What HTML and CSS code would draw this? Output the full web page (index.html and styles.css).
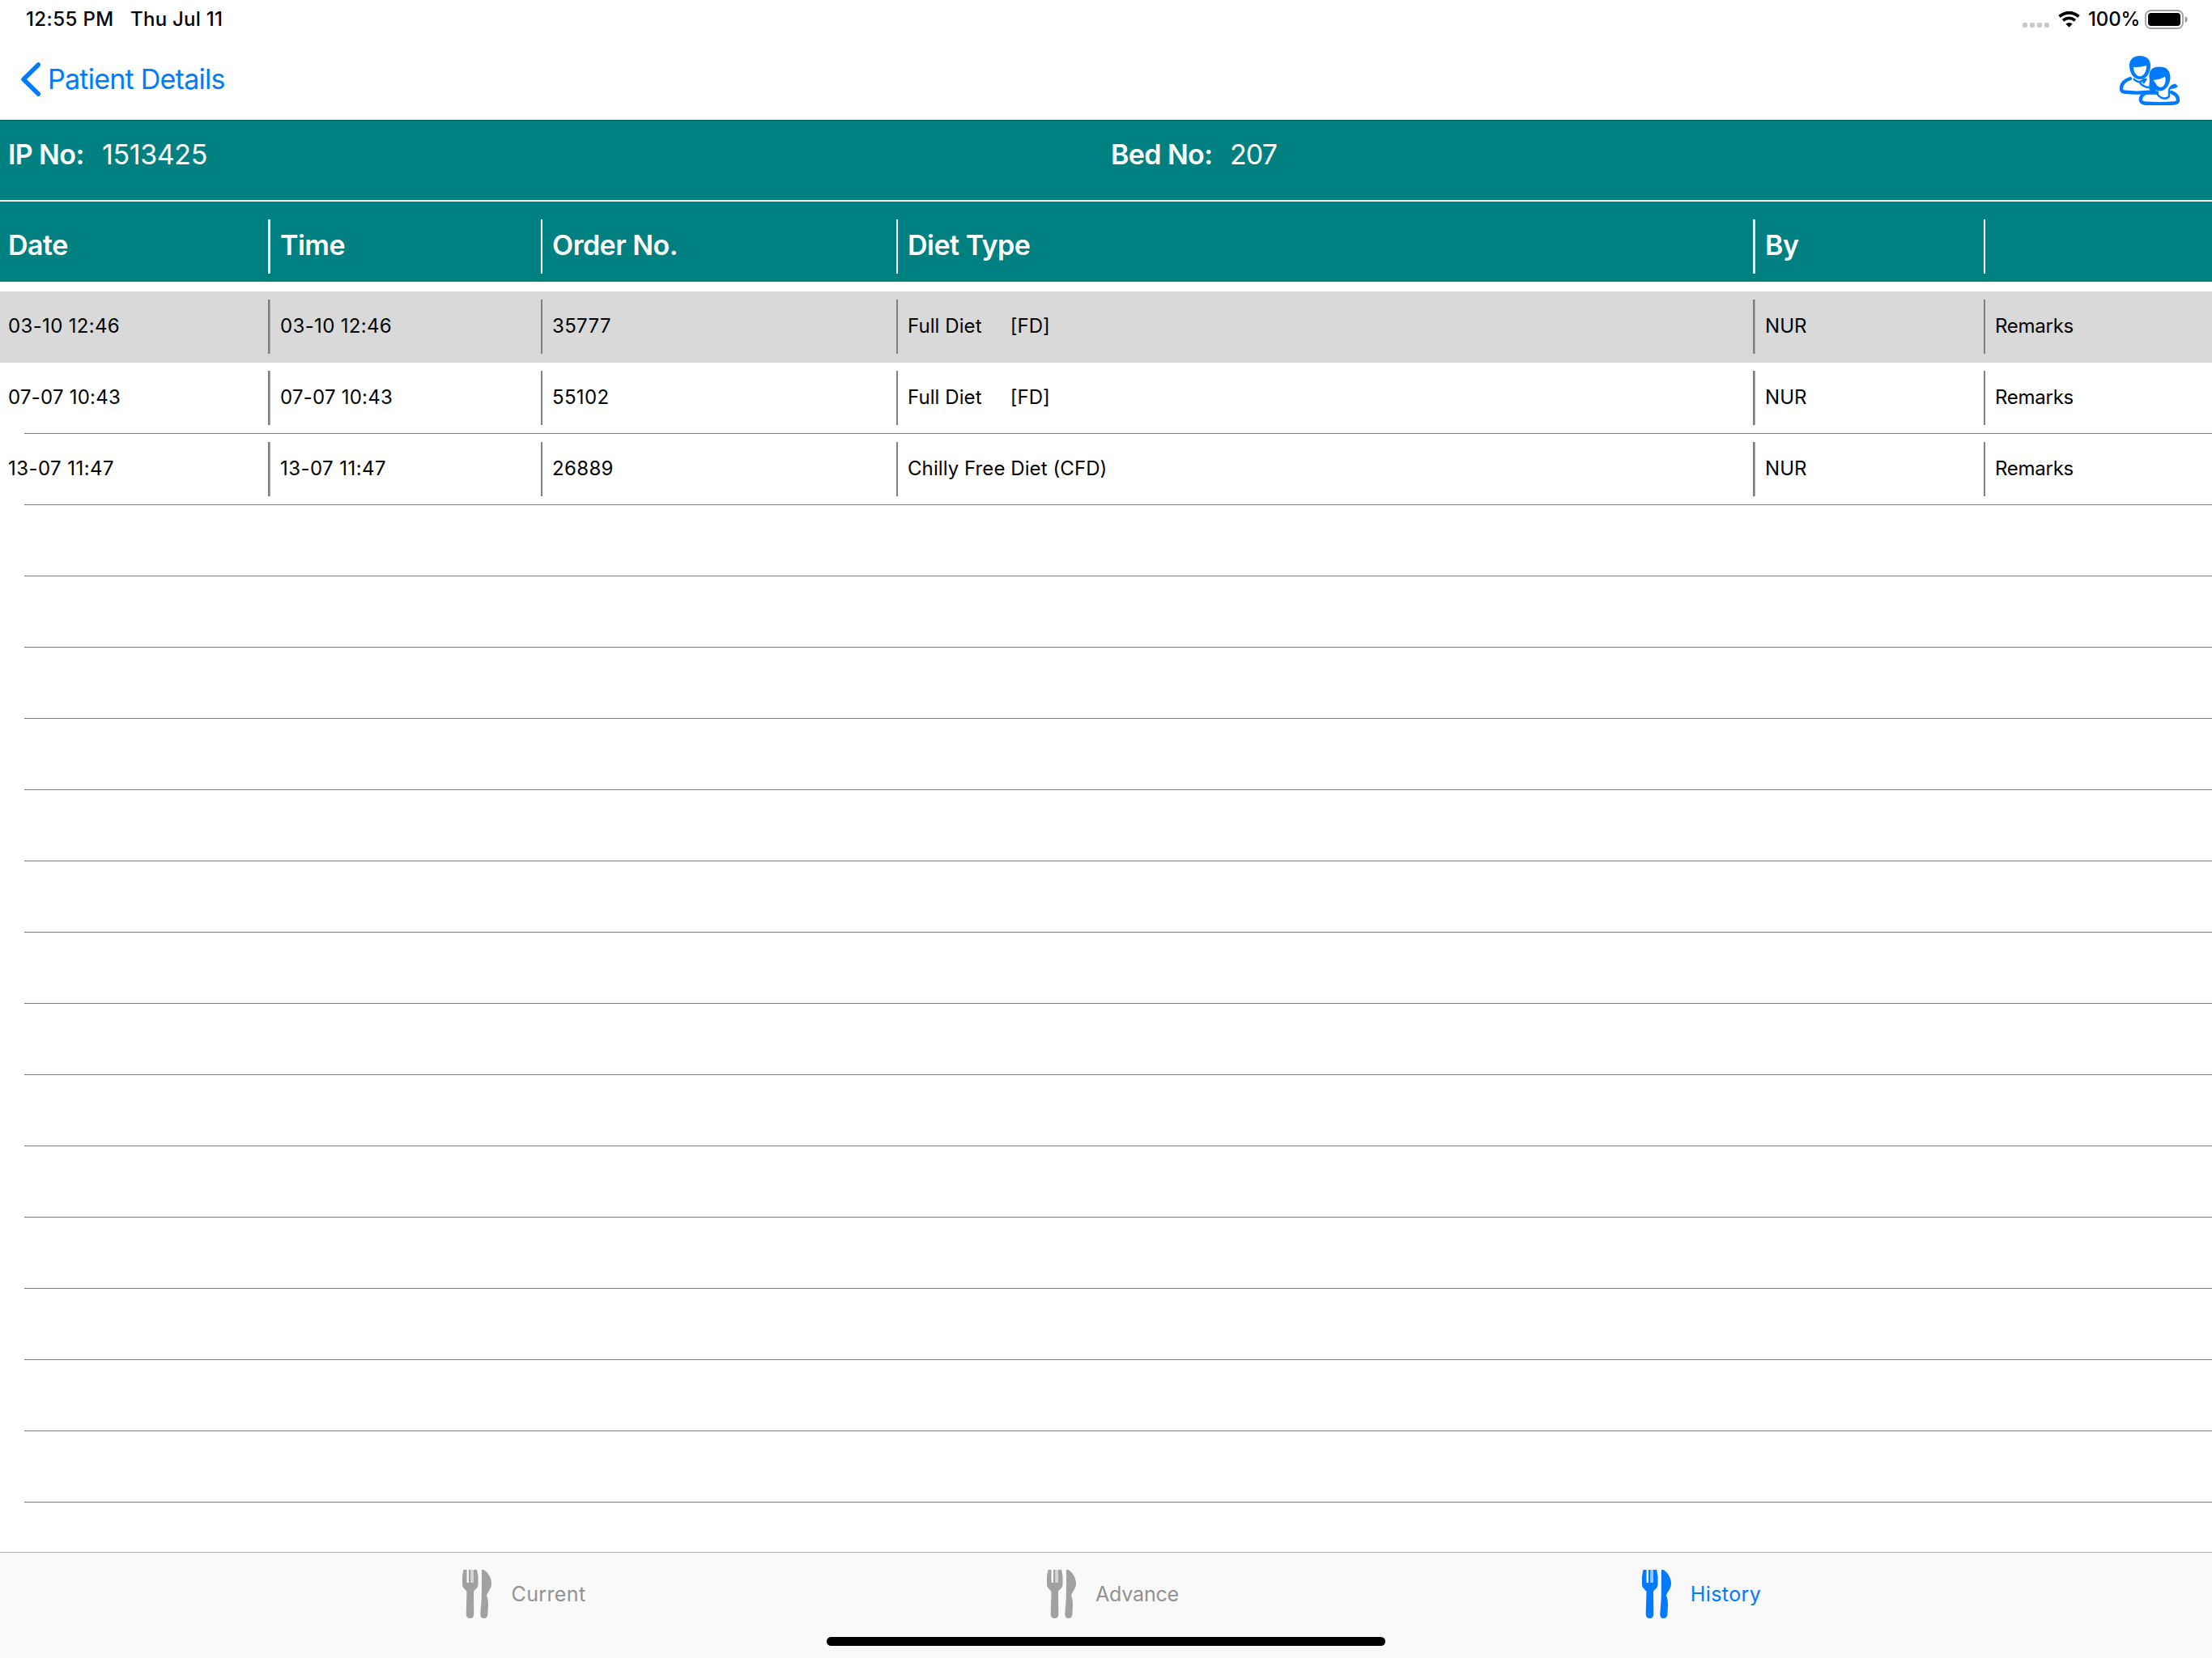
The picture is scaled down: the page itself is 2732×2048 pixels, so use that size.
FILE: index.html
```html
<!DOCTYPE html>
<html lang="en">
<head>
<meta charset="utf-8">
<title>Patient Diet History</title>
<link rel="stylesheet" href="styles.css">
</head>
<body>
<svg class="sprite" aria-hidden="true">
  <symbol id="cutlery" viewBox="0 0 36 60">
    <path d="M1.5 0H5.5V16H8V0H10.3V16H14V0H18L19.5 8V18C19.5 23 15.5 24 14 27L14.3 55Q14 60 9.5 60Q5 60 4.7 55L5.500 27C4 24 0 23 0 18V8Z"/>
    <path d="M10.300 0H14V16H10.300Z" opacity=".4"/>
    <path d="M24 0H26.5C31 3 36 9 36 17C36 24 31 27 30 32Q32 36 32 44L31.4 55Q31 60 26.500 60Q22.300 60 22.300 55L23.800 34Z"/>
  </symbol>
</svg>
<div class="screen">
  <header class="status">
    <span class="clock">12:55 PM</span>
    <span class="day">Thu Jul 11</span>
    <div class="indicators">
      <div class="dots"><i></i><i></i><i></i><i></i></div>
      <svg class="wifi" viewBox="0 0 27 20">
        <path d="M1.500 6.300Q13.500 -2.800 25.500 6.300" stroke-width="4"/>
        <path d="M6 11.300Q13.500 5.600 21 11.300" stroke-width="3.600"/>
        <path class="solid" d="M13.500 19.800L9.300 15.600Q13.500 12.300 17.700 15.600Z"/>
      </svg>
      <span class="percent">100%</span>
      <svg class="battery" viewBox="0 0 53 24">
        <rect class="shell" x="1" y="1" width="46" height="22" rx="6.500"/>
        <rect x="4" y="4" width="40" height="16" rx="3.800"/>
        <path class="cap" d="M49.700 8Q52.700 9 52.700 12Q52.700 15 49.700 16Z"/>
      </svg>
    </div>
  </header>
  <nav class="navbar">
    <a class="back">
      <svg viewBox="0 0 26 42"><path d="M22.300 3L4 21L22.300 39"/></svg>
      <span>Patient Details</span>
    </a>
    <svg class="people" viewBox="0 0 74 61">
      <path d="M13 28C4 31 1.800 36 2 41Q2.200 44.500 7 44.800Q22 46.500 38 44.500" class="outline"/>
      <path class="hair" fill-rule="evenodd" d="M25 0C16 0 12 5 12 12C12 21 17 29 25 29C33 29 38 21 38 12C38 5 34 0 25 0ZM17 14Q26 14.500 33 12C33.500 18 30 25.300 25 25.300C20 25.300 17 19 17 14Z"/>
      <path class="thin" d="M17 28Q20 32 25 32Q29 31 31 28M24 32Q29 39 36 39M29 34L33 28"/>
      <path d="M32 46C27 48 25.800 52 26 55Q26.500 58 31 58.500Q49 60 67 58.500Q72.500 58 72 54Q71.500 48 64 45" class="outline"/>
      <path class="hair" fill-rule="evenodd" d="M49 13.500C40 13.500 36 18 36.500 26C36.500 36 43 43.500 49.500 43.500C58 43 62.500 34 62.500 26C62 18 58 13.500 49 13.500ZM41.500 30Q51 29 56 25.500C58 32 55 38.800 50.500 38.800C46 38.800 45 34 41.500 30Z"/>
      <path class="hair" d="M37 30L45 43L40 46L36 40Z"/>
      <path class="thin" d="M45 45Q49 52 54 52.500Q59 53 61 50V42Q63 37 67 36.500"/>
      <path class="hair" d="M62 41Q64 34 69 34.500L72 38Q68 41 62 41Z"/>
      <path class="outline" d="M30 45.500H46"/>
    </svg>
  </nav>
  <section class="patient">
    <p class="ip"><b>IP No:</b><span>1513425</span></p>
    <p class="bed"><b>Bed No:</b><span>207</span></p>
  </section>
  <section class="columns grid">
    <span>Date</span><span>Time</span><span>Order No.</span><span>Diet Type</span><span>By</span><span></span>
  </section>
  <main class="orders">
    <div class="row grid selected"><span class="num">03-10 12:46</span><span class="num">03-10 12:46</span><span class="num">35777</span><span>Full Diet<em>[FD]</em></span><span>NUR</span><span class="remarks">Remarks</span></div>
    <div class="row grid"><span class="num snug">07-07 10:43</span><span class="num snug">07-07 10:43</span><span class="num">55102</span><span>Full Diet<em>[FD]</em></span><span>NUR</span><span class="remarks">Remarks</span></div>
    <div class="row grid"><span class="num loose">13-07 11:47</span><span class="num loose">13-07 11:47</span><span class="num">26889</span><span>Chilly Free Diet (CFD)</span><span>NUR</span><span class="remarks">Remarks</span></div>
    <div class="row"></div><div class="row"></div><div class="row"></div><div class="row"></div><div class="row"></div><div class="row"></div><div class="row"></div>
    <div class="row"></div><div class="row"></div><div class="row"></div><div class="row"></div><div class="row"></div><div class="row"></div><div class="row"></div>
  </main>
  <footer class="tabbar">
    <div class="tabs">
      <a class="tab"><svg><use href="#cutlery"/></svg><span>Current</span></a>
      <a class="tab advance"><svg><use href="#cutlery"/></svg><span>Advance</span></a>
      <a class="tab active"><svg><use href="#cutlery"/></svg><span>History</span></a>
    </div>
    <div class="home"></div>
  </footer>
</div>
</body>
</html>
```
FILE: styles.css
```css
* { box-sizing: border-box; }
body {
  margin: 0;
  background: #fff;
  color: #000;
  font-family: Inter, "Noto Sans", sans-serif;
}
p { margin: 0; }
.sprite { display: none; }
.screen {
  display: flex;
  flex-direction: column;
  width: 2732px;
  height: 2048px;
  overflow: hidden;
}

/* Status bar */
.status {
  display: flex;
  height: 47px;
  padding: 0 30px 0 32px;
  font-size: 24px;
  font-weight: 500;
  line-height: 48px;
  white-space: nowrap;
}
.clock { width: 129px; letter-spacing: .4px; }
.day { letter-spacing: .27px; }
.indicators { display: flex; margin-left: auto; }
.dots { display: flex; gap: 3px; margin: 28px 11px 0 0; }
.dots i { width: 6px; height: 6px; border-radius: 2px; background: #c8c8c8; }
.wifi { width: 27px; height: 20px; margin: 14px 10px 0 0; fill: none; stroke: #000; }
.wifi .solid { fill: #000; stroke: none; }
.percent { width: 70px; letter-spacing: -.15px; }
.battery { width: 53px; height: 24px; margin-top: 12px; }
.shell { fill: none; stroke: #a0a0a0; stroke-width: 1.8; }
.cap { fill: #999; }

/* Navigation bar */
.navbar {
  display: flex;
  justify-content: space-between;
  height: 101px;
  padding: 0 40px 0 25px;
  color: #007aff;
}
.back {
  display: flex;
  align-items: center;
  gap: 8px;
  font-size: 34px;
  line-height: 101px;
  letter-spacing: -.75px;
}
.back svg {
  width: 26px;
  height: 42px;
  fill: none;
  stroke: #007aff;
  stroke-width: 5.5;
  stroke-linecap: round;
  stroke-linejoin: round;
}
.people { width: 74px; height: 61px; margin-top: 22px; }
.outline { fill: none; stroke: #007aff; stroke-width: 4.4; stroke-linecap: round; }
.thin { fill: none; stroke: #007aff; stroke-width: 2.4; }
.hair { fill: #007aff; }

/* Patient strip */
.patient {
  display: grid;
  grid-template-columns: 1362px 1fr;
  height: 101px;
  padding-left: 10px;
  border-top: 1px solid #005c5c;
  border-bottom: 2px solid #fff;
  background: #008080;
  color: #fff;
  font-size: 34px;
  line-height: 83px;
}
.patient p { display: flex; }
.patient b { font-weight: 600; letter-spacing: -.6px; }
.ip b { width: 116px; }
.bed b { width: 147px; }
.patient span { letter-spacing: -.4px; }
.patient .bed span { letter-spacing: -.9px; }

/* Order table */
.grid {
  display: grid;
  grid-template-columns: 331px 337px 439px 1058px 285px 1fr;
  --edge: #808080;
  --edge-soft: #a8a8a8;
}
.grid > span {
  height: 67px;
  padding-left: 14px;
  white-space: pre;
  background: linear-gradient(var(--edge), var(--edge)) left / 2px 100% no-repeat;
}
.grid > span:first-child { padding-left: 10px; background: none; }
.grid > span:nth-child(2), .grid > span:nth-child(5) {
  padding-left: 15px;
  background: linear-gradient(90deg, var(--edge) 2px, var(--edge-soft) 2px, var(--edge-soft) 3px, transparent 3px);
}
.columns {
  --edge: #fff;
  --edge-soft: #d8ebeb;
  height: 99px;
  padding-top: 22px;
  background: #008080;
  color: #fff;
  font-size: 34px;
  font-weight: 600;
  line-height: 64px;
  letter-spacing: -.5px;
}
.orders { flex: 1; padding-top: 12px; }
.row {
  height: 88px;
  padding-top: 10px;
  background: linear-gradient(#7a7a7a, #7a7a7a) 30px bottom / 100% 1px no-repeat;
  font-size: 24px;
  line-height: 65px;
}
.row.selected { background: #d9d9d9; }
.row span { letter-spacing: .08px; }
.row .num { letter-spacing: .34px; }
.row .snug { letter-spacing: .24px; }
.row .loose { letter-spacing: .44px; }
.row em { margin-left: 35px; font-style: normal; }
.row .remarks { letter-spacing: -.27px; }

/* Tab bar */
.tabbar {
  height: 131px;
  border-top: 1px solid #b2b2b2;
  background: #f9f9f9;
}
.tabs {
  display: grid;
  grid-template-columns: repeat(3, 727px);
  height: 104px;
  padding-left: 284px;
}
.tab {
  display: flex;
  justify-content: center;
  gap: 24px;
  padding-top: 21px;
  color: #929292;
  font-size: 25px;
  line-height: 61px;
  letter-spacing: .38px;
}
.tab svg { width: 36px; height: 60px; fill: #a1a1a1; }
.tab.advance { letter-spacing: -.2px; }
.tab.active { color: #007aff; }
.tab.active svg { fill: #007aff; }
.home {
  width: 690px;
  height: 11px;
  margin: 0 auto;
  border-radius: 6px;
  background: #000;
}
```
